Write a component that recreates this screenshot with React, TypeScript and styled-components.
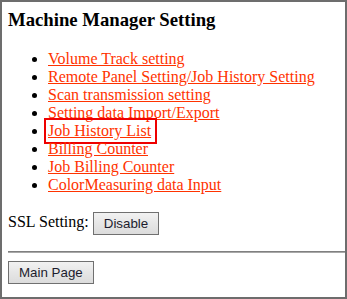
import styled, { createGlobalStyle } from 'styled-components'

const GlobalStyle = createGlobalStyle`
  html, body {
    margin: 0;
    padding: 0;
    background: #ffffff;
  }
`

const Frame = styled.div`
  box-sizing: border-box;
  width: 347px;
  height: 299px;
  border: 2px solid #6d6d6d;
  padding: 7px 0 0 6px;
  font-family: "Liberation Serif", "Times New Roman", serif;
  font-size: 16px;
  color: #000000;
  background: #ffffff;
  overflow: hidden;
`

const Title = styled.h3`
  margin: 0 0 18.72px;
  font-size: 18.72px;
  font-weight: bold;
`

const MenuList = styled.ul`
  margin: 0 0 16px;
  padding-left: 40px;
  list-style: disc;
`

const MenuLink = styled.a<{ $marked?: boolean }>`
  position: relative;
  color: #ff3300;
  text-decoration: underline;
  cursor: pointer;
  ${(p) => p.$marked && `
    &::after {
      content: "";
      position: absolute;
      left: -4px;
      top: -4px;
      right: -6px;
      bottom: -5px;
      border: 2px solid #ee0000;
    }
  `}
`

const SslRow = styled.p`
  margin: 0 0 16px;
  line-height: 24px;
`

const Button = styled.button`
  box-sizing: border-box;
  height: 23px;
  padding: 0 10px;
  border: 1px solid #707070;
  border-radius: 0;
  background: linear-gradient(#f2f2f2, #e6e6e6 50%, #dcdcdc);
  font-family: "Liberation Sans", Arial, sans-serif;
  font-size: 13.33px;
  color: #1c1c2e;
  vertical-align: middle;
`

const Divider = styled.hr`
  margin: 0 0 8px;
  border: none;
  border-top: 1px solid #808080;
  border-bottom: 1px solid #a8a8a8;
  height: 0;
`

const items = [
  'Volume Track setting',
  'Remote Panel Setting/Job History Setting',
  'Scan transmission setting',
  'Setting data Import/Export',
  'Job History List',
  'Billing Counter',
  'Job Billing Counter',
  'ColorMeasuring data Input',
]

export default function App() {
  return (
    <>
      <GlobalStyle />
      <Frame>
        <Title>Machine Manager Setting</Title>
        <MenuList>
          {items.map((item) => (
            <li key={item}>
              <MenuLink $marked={item === 'Job History List'}>{item}</MenuLink>
            </li>
          ))}
        </MenuList>
        <SslRow>
          SSL Setting: <Button>Disable</Button>
        </SslRow>
        <Divider />
        <Button>Main Page</Button>
      </Frame>
    </>
  )
}
